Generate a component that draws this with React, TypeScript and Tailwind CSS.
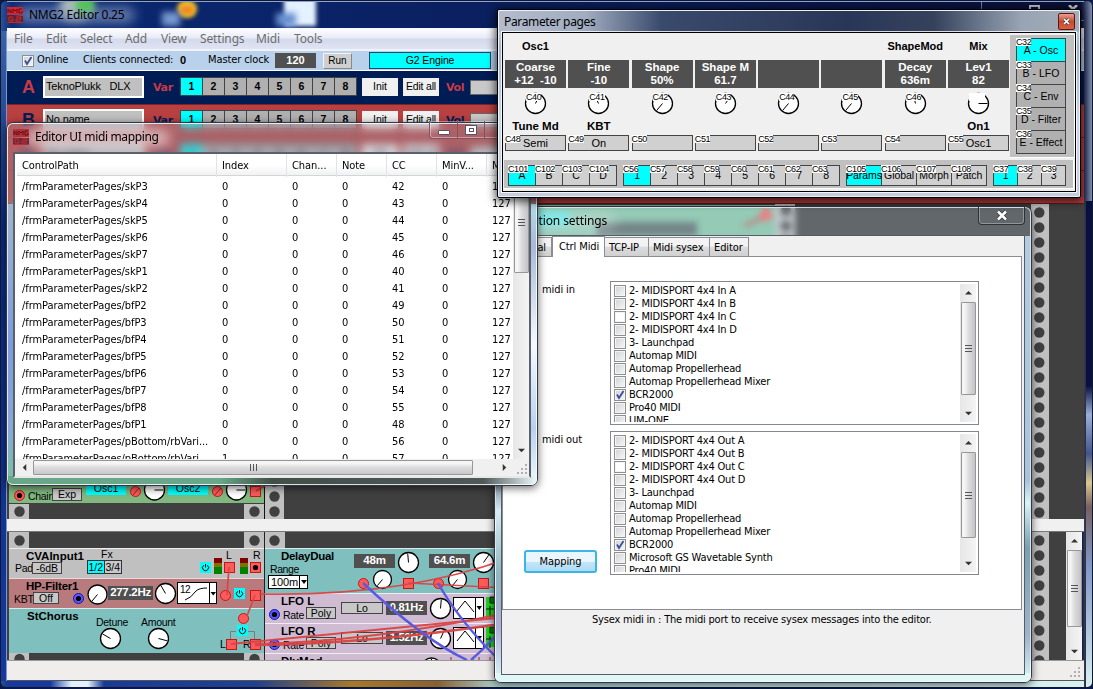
import React from "react";

const UI = "font-['DejaVu_Sans_Condensed','DejaVu_Sans',sans-serif] [font-stretch:condensed]";
const SEGOE = "font-['Noto_Sans','Open_Sans',sans-serif]";
const ARIAL = "font-['Liberation_Sans',Arial,sans-serif]";

function AppIcon({ dim = false }: { dim?: boolean }) {
  return (
    <svg width="16" height="16" viewBox="0 0 16 16" className="shrink-0">
      <rect width="16" height="8" fill={dim ? "#b83038" : "#d8242c"} />
      <rect y="9" width="16" height="6" fill={dim ? "#642c38" : "#5a2430"} />
      <path d="M1 6V2l3 4V2M6 6V2l2 2 2-2v4M15 2h-3v4h3V4" stroke="#5a1018" fill="none" />
      <path d="M6 10H2v4h4v-2H4M9 10h5v2H9v2h5" stroke="#d8242c" fill="none" />
      <rect y="15" width="16" height="1" fill="#c02830" />
    </svg>
  );
}

function Check({ on = false, plain = false }: { on?: boolean; plain?: boolean }) {
  return (
    <span className={`block h-[12px] w-[12px] shrink-0 border border-[#8e8f8f] ${plain ? "bg-white" : "bg-[linear-gradient(135deg,#cfd3d8,#f6f6f6)]"} shadow-[inset_0_0_0_1px_#f4f4f4]`}>
      {on && (
        <svg width="10" height="10" viewBox="0 0 10 10">
          <path d="M2 4.5L4 8L8.5 1" stroke="#3a4f96" strokeWidth="1.8" fill="none" />
        </svg>
      )}
    </span>
  );
}

function Arrow({ dir }: { dir: "up" | "down" | "left" | "right" }) {
  const d = { up: "M0 5L4 1L8 5Z", down: "M0 2L8 2L4 6Z", left: "M6 0L2 4L6 8Z", right: "M2 0L6 4L2 8Z" }[dir];
  return (
    <svg width="7" height="7" viewBox="0 0 8 8" className="shrink-0">
      <path d={d} fill="#333" />
    </svg>
  );
}

function VScroll({ thumb, className = "" }: { thumb: string; className?: string }) {
  return (
    <div className={`flex w-[16px] shrink-0 flex-col items-center bg-[linear-gradient(90deg,#e6e6e6,#f4f4f4)] ${className}`}>
      <div className="flex h-[18px] items-center"><Arrow dir="up" /></div>
      <div className={`flex w-[15px] flex-col items-center justify-center gap-px rounded-[1px] border border-[#979797] bg-[linear-gradient(90deg,#f5f5f5_20%,#dcdcdc_50%,#c4c4c8)] ${thumb}`}>
        <i className="mb-px h-px w-[7px] bg-[#555]" /><i className="mb-px h-px w-[7px] bg-[#555]" /><i className="h-px w-[7px] bg-[#555]" />
      </div>
      <div className="mt-auto flex h-[18px] items-center"><Arrow dir="down" /></div>
    </div>
  );
}

function Grip() {
  return (
    <svg width="12" height="12" viewBox="0 0 12 12" fill="#b0b0b0">
      {[[8, 1], [4, 5], [8, 5], [0, 9], [4, 9], [8, 9]].map(([x, y]) => <rect key={`${x}-${y}`} x={x} y={y} width="2" height="2" />)}
    </svg>
  );
}

/* ---------- main window ---------- */

function Slot({ letter, name, red }: { letter: string; name: string; red?: boolean }) {
  const ink = red ? "text-[#001d55]" : "text-[#c93a47]";
  return (
    <div className={`flex h-[33px] shrink-0 items-start ${red ? "border-t border-[#7c2328] bg-[#b94040] pt-[4px]" : "bg-[#001c55] pt-[5px]"}`}>
      <b className={`${ARIAL} ${ink} ml-[15px] w-[14px] text-[18px] leading-[23px]`}>{letter}</b>
      <div className={`${ARIAL} ml-[7px] h-[22px] w-[101px] whitespace-pre border-2 border-white bg-[#c0c0c0] pl-px text-[11px] leading-[16px] tracking-[-0.15px] text-black`}>{name}</div>
      <b className={`font-['DejaVu_Sans',sans-serif] ${ink} ml-[9px] w-[27px] text-[11px] leading-[23px] tracking-[-0.3px]`}>Var</b>
      <div className="mt-px flex border-l border-[#444]">
        {[1, 2, 3, 4, 5, 6, 7, 8].map((n) => (
          <b key={n} className={`${ARIAL} h-[19px] w-[22px] border-y border-r border-[#444] text-center text-[10.5px] leading-[17px] ${n === 1 ? "bg-[#00ffff]" : "bg-[#b0b0b0]"}`}>{n}</b>
        ))}
      </div>
      <div className={`${ARIAL} ml-[5px] mt-[2px] h-[18px] w-[36px] bg-[#f0f0f0] text-center text-[10.5px] leading-[17px]`}>Init</div>
      <div className={`${ARIAL} ml-[5px] mt-[2px] h-[18px] w-[36px] whitespace-nowrap bg-[#f0f0f0] text-center text-[10.5px] leading-[17px] tracking-[-0.2px]`}>Edit all</div>
      <b className={`font-['DejaVu_Sans',sans-serif] ${ink} ml-[7px] w-[24px] text-[11px] leading-[23px] tracking-[-0.3px]`}>Vol</b>
      <div className="mt-[4px] h-[15px] w-[120px] border border-[#666] bg-[#c8c8c8]" />
    </div>
  );
}

function Holes({ x, ys }: { x: number; ys: number[] }) {
  return <>{ys.map((y) => <circle key={y} cx={x} cy={y} r="5.2" fill="#404040" />)}</>;
}

function Knob({ x, y, r = 10, a }: { x: number; y: number; r?: number; a: number }) {
  const t = (a * Math.PI) / 180;
  return (
    <g stroke="#000">
      <circle cx={x} cy={y} r={r} fill="#fff" strokeWidth="1.3" />
      <line x1={x} y1={y} x2={x + Math.sin(t) * (r - 1)} y2={y - Math.cos(t) * (r - 1)} strokeWidth="1" />
    </g>
  );
}

function Jack({ x, y, c = "red", square, hole }: { x: number; y: number; c?: "red" | "blue"; square?: boolean; hole?: boolean }) {
  const fill = c === "red" ? "#ff5a5a" : "#5a5aff";
  const edge = c === "red" ? "#c01818" : "#1414a0";
  return (
    <g>
      {square ? <rect x={x - 5} y={y - 5} width="10" height="10" fill={fill} stroke={edge} /> : <circle cx={x} cy={y} r="5" fill={fill} stroke={edge} />}
      {hole && <circle cx={x} cy={y} r="2.6" fill="#000" />}
    </g>
  );
}

function Power({ x, y }: { x: number; y: number }) {
  return (
    <g transform={`translate(${x - 5.5} ${y - 5.5})`}>
      <rect width="11" height="11" fill="#00ffff" />
      <path d="M3.7 3.3A3 3 0 1 0 7.3 3.3M5.5 2V5.5" fill="none" stroke="#000" />
    </g>
  );
}

const tag = `${ARIAL} absolute whitespace-nowrap leading-[13px] text-black`;
const btn = "border border-[#444] bg-[#c8c8c8] text-center";
const disp = "bg-[#505050] text-center font-bold text-white";

function UpperRack() {
  const col = Array.from({ length: 22 }, (_, i) => 7 + i * 15);
  return (
    <div className="relative h-[315px] shrink-0 overflow-hidden bg-[#404040]">
      <div className="absolute left-[2px] top-0 h-[299px] w-[255px] bg-[#80b880]" />
      <div className="absolute left-[258px] top-px h-[60px] w-[510px] bg-[#84c4a4]" />
      <div className="absolute left-[515px] top-[8px] h-[14px] w-[48px] bg-[#40e8e0]" />
      <div className="absolute left-[590px] top-[18px] h-[14px] w-[100px] bg-[#5a6a68]" />
      <svg className="absolute left-px top-0" width="1078" height="315">
        <rect x="767" width="20" height="315" fill="#c0c0c0" />
        <Holes x={778} ys={col} />
        <rect x="1023" width="18" height="315" fill="#c0c0c0" />
        <Holes x={1031.3} ys={col.map((y) => y + 1.500)} />
        <path d="M736 22L758 12" stroke="#d04848" strokeWidth="3" />
        <circle cx="758" cy="11" r="6" fill="#ff5a5a" />
        <rect x="1" y="300" width="20" height="15" fill="#c0c0c0" />
        <rect x="236" y="300" width="20" height="15" fill="#c0c0c0" />
        <rect x="256" width="1" height="315" fill="#111" />
        <rect x="257" y="61" width="19" height="254" fill="#c0c0c0" />
        <Holes x={11.5} ys={[307.5]} />
        <Holes x={246.5} ys={[307.5]} />
        <Holes x={266.5} ys={[277.5, 292.5, 307.5]} />
        <Jack x={11.5} y={291.5} hole />
        <Jack x={127.5} y={287.5} /><path d="M125 291L131 284" stroke="#b01818" />
        <Knob x={146.5} y={286} a={90} />
        <Jack x={209.5} y={287.5} /><path d="M207 291L213 284" stroke="#b01818" />
        <Knob x={228.5} y={286} a={90} />
        <Jack x={247.5} y={287.5} square />
        <path d="M248 287L260 280" stroke="#d83030" strokeWidth="1.5" />
      </svg>
      <b className={`${tag} left-[20px] top-[272px] text-[11px]`}>Mix</b>
      <span className={`${tag} left-[21px] top-[286px] text-[10.5px] tracking-[-0.3px]`}>Chain</span>
      <span className={`${tag} ${btn} left-[45px] top-[284px] h-[13px] w-[30px] text-[10.5px] !leading-[11px]`}>Exp</span>
      <span className={`${tag} left-[79px] top-[278px] h-[13px] w-[40px] bg-[#00ffff] text-center text-[10.5px]`}>Osc1</span>
      <span className={`${tag} left-[161px] top-[278px] h-[13px] w-[40px] bg-[#00ffff] text-center text-[10.5px]`}>Osc2</span>
    </div>
  );
}

function Module({ className }: { className: string }) {
  return <div className={`shrink-0 border-t border-white/70 ${className}`} />;
}

function LowerRack() {
  const rail = "h-[16px] shrink-0 border-x-[20px] border-[#c0c0c0] bg-[#404040]";
  return (
    <div className="relative h-[128px] min-w-0 flex-1 overflow-hidden bg-[#404040]">
      <div className="flex">
        <div className="ml-[2px] flex w-[255px] flex-col">
          <div className={rail} />
          <Module className="h-[30px] bg-[#c0c0c0]" />
          <Module className="h-[30px] bg-[#b97a7d]" />
          <Module className="h-[45px] bg-[#7fc0bf]" />
          <div className={rail} />
        </div>
        <div className="w-px bg-[#222]" />
        <div className="flex w-[420px] flex-col">
          <div className={rail} />
          <Module className="h-[45px] bg-[#7fc0bf]" />
          <Module className="h-[30px] bg-[#d0bcd2]" />
          <Module className="h-[30px] bg-[#d0bcd2]" />
          <Module className="h-[20px] bg-[#d0bcd2]" />
        </div>
      </div>

      <b className={`${tag} left-[19px] top-[18px] text-[11.5px]`}>CVAInput1</b>
      <span className={`${tag} left-[8px] top-[30px] text-[10.5px] tracking-[-0.3px]`}>Pad</span>
      <span className={`${tag} ${btn} left-[25px] top-[30px] h-[12px] w-[30px] text-[10.5px] !leading-[10px]`}>-6dB</span>
      <span className={`${tag} left-[94px] top-[16px] text-[10.5px]`}>Fx</span>
      <span className={`${tag} left-[80px] top-[28px] flex h-[14px] w-[35px] border border-[#333] bg-[#c8c8c8] text-[10.5px] !leading-[12px]`}>
        <i className="w-[17px] border-r border-[#333] bg-[#00ffff] text-center not-italic">1/2</i>
        <i className="w-[17px] text-center not-italic">3/4</i>
      </span>
      <span className={`${tag} left-[219px] top-[17px] text-[10.5px]`}>L</span>
      <span className={`${tag} left-[246px] top-[17px] text-[10.5px]`}>R</span>

      <b className={`${tag} left-[19px] top-[48px] text-[11.5px] tracking-[-0.2px]`}>HP-Filter1</b>
      <span className={`${tag} left-[7px] top-[61px] text-[10.5px] tracking-[-0.3px]`}>KBT</span>
      <span className={`${tag} ${btn} left-[26px] top-[60px] h-[12px] w-[26px] text-[10.5px] !leading-[10px]`}>Off</span>
      <span className={`${tag} ${disp} left-[101px] top-[54px] h-[14px] w-[45px] text-[11.5px] tracking-[-0.3px]`}>277.2Hz</span>
      <span className={`${tag} left-[170px] top-[50px] h-[22px] w-[40px] border border-black bg-white pl-[2px] text-[10px] tracking-[-0.6px]`}>12</span>

      <b className={`${tag} left-[20px] top-[78px] text-[11.5px]`}>StChorus</b>
      <span className={`${tag} left-[89px] top-[84px] text-[10.5px] tracking-[-0.3px]`}>Detune</span>
      <span className={`${tag} left-[134px] top-[84px] text-[10.5px] tracking-[-0.3px]`}>Amount</span>
      <span className={`${tag} left-[213px] top-[106px] text-[10.5px]`}>L</span>
      <span className={`${tag} left-[236px] top-[106px] text-[10.5px]`}>R</span>

      <b className={`${tag} left-[274px] top-[18px] text-[11.5px] tracking-[-0.3px]`}>DelayDual</b>
      <span className={`${tag} left-[263px] top-[31px] text-[10.5px] tracking-[-0.4px]`}>Range</span>
      <span className={`${tag} left-[261px] top-[43px] h-[14px] w-[40px] border border-black bg-white pl-[2px] text-[11px] !leading-[13px] tracking-[-0.1px]`}>100m</span>
      <span className={`${tag} ${disp} left-[347px] top-[22px] h-[14px] w-[41px] text-[11.5px] tracking-[-0.2px]`}>48m</span>
      <span className={`${tag} ${disp} left-[422px] top-[22px] h-[14px] w-[41px] text-[11.5px] tracking-[-0.2px]`}>64.6m</span>
      <b className={`${tag} left-[274px] top-[63px] text-[11.5px]`}>LFO L</b>
      <span className={`${tag} left-[276px] top-[77px] text-[10.5px] tracking-[-0.3px]`}>Rate</span>
      <span className={`${tag} ${btn} left-[299px] top-[75px] h-[12px] w-[30px] text-[10.5px] !leading-[10px]`}>Poly</span>
      <span className={`${tag} ${btn} left-[334px] top-[70px] h-[12px] w-[42px] text-[10.5px] !leading-[10px]`}>Lo</span>
      <span className={`${tag} ${disp} left-[379px] top-[69px] h-[14px] w-[41px] text-[11px] tracking-[-0.2px]`}>0.81Hz</span>
      <b className={`${tag} left-[274px] top-[93px] text-[11.5px]`}>LFO R</b>
      <span className={`${tag} left-[276px] top-[107px] text-[10.5px] tracking-[-0.3px]`}>Rate</span>
      <span className={`${tag} ${btn} left-[299px] top-[105px] h-[12px] w-[30px] text-[10.5px] !leading-[10px]`}>Poly</span>
      <span className={`${tag} ${btn} left-[334px] top-[100px] h-[12px] w-[42px] text-[10.5px] !leading-[10px]`}>Lo</span>
      <span className={`${tag} ${disp} left-[379px] top-[99px] h-[14px] w-[41px] text-[11px] tracking-[-0.2px]`}>1.52Hz</span>
      <b className={`${tag} left-[274px] top-[123px] text-[11.5px]`}>DlyMod</b>

      <svg className="absolute left-0 top-0" width="1060" height="128">
        <rect x="1024" width="18" height="128" fill="#c0c0c0" />
        <Holes x={1032.3} ys={[8.5, 23.5, 38.5, 53.5, 68.5, 83.5, 98.5, 113.5, 128.5]} />
        <Holes x={12.5} ys={[8.5, 127]} />
        <Holes x={247.5} ys={[8.5, 127]} />
        <Holes x={267.5} ys={[8.5]} />
        <Power x={198.500} y={35.500} />
        <g><rect x="207" y="26" width="8" height="5" fill="#800000" /><rect x="207" y="31" width="8" height="4" fill="#807000" /><rect x="207" y="35" width="8" height="7" fill="#008000" /></g>
        <g><rect x="233" y="26" width="8" height="5" fill="#800000" /><rect x="233" y="31" width="8" height="4" fill="#807000" /><rect x="233" y="35" width="8" height="7" fill="#008000" /></g>
        <Jack x={222.5} y={35.5} square />
        <Jack x={248.5} y={35.5} square hole />
        <Jack x={71.5} y={66.5} c="blue" hole />
        <Knob x={90.5} y={62.500} r={9.5} a={220} />
        <Knob x={158.5} y={61.5} a={-30} />
        <path d="M178 68Q184 66 189 59Q192 56 200 56" fill="none" stroke="#000" />
        <path d="M202.5 50V72" stroke="#000" /><path d="M203.500 60H209L206.250 63.500Z" />
        <Jack x={218.5} y={63.5} />
        <Power x={232.500} y={61.500} />
        <Jack x={248.5} y={63.5} square />
        <Jack x={236.5} y={86.5} />
        <Power x={235.500} y={98.500} />
        <path d="M223.5 107V99.5H229M241 99.5H247.500V107" stroke="#708080" fill="none" />
        <Knob x={103.5} y={106.5} a={-60} />
        <Knob x={151.5} y={106.5} a={105} />
        <Jack x={224.5} y={112.5} square />
        <Jack x={248.5} y={112.5} square />

        <path d="M292.5 43V57" stroke="#000" /><path d="M294 48H300L297 52Z" />
        <Knob x={401.5} y={30.5} a={-5} />
        <Knob x={476.5} y={30.5} a={35} />
        <Jack x={356.5} y={51.5} /><Knob x={375.5} y={47.5} r={9} a={220} />
        <Jack x={401.5} y={51.5} square />
        <Jack x={431.5} y={51.5} /><Knob x={450.5} y={47.5} r={9} a={220} />
        <Jack x={476.5} y={51.5} square />
        {[0, 30].map((dy) => (
          <g key={dy} transform={`translate(0 ${dy})`}>
            <Jack x={267.5} y={82.5} c="blue" hole />
            <Knob x={433.5} y={76.5} a={dy ? 25 : 5} />
            <rect x="446.5" y="65.5" width="30" height="21" fill="#fff" stroke="#000" />
            <path d="M468.5 65V86M450 79L458 69L467 80" stroke="#000" fill="none" />
            <path d="M469.500 74H475L472.250 78Z" />
            <rect x="479" y="65" width="9" height="20" fill="#20d020" />
            <path d="M483 65H488V71H483ZM479 77H488M483 74V86" stroke="#052005" fill="#087808" />
          </g>
        ))}
        <Knob x={424.5} y={136} a={0} />
        <path d="M444 125V128M466 125V128M472 125V128M483 125V128" stroke="#733" />
        <g fill="none" stroke="#d94444" strokeWidth="1.7" opacity="0.95">
          <path d="M222 35L220 63" />
          <path d="M248 63L240 84" />
          <path d="M252 62C350 64 430 52 500 27" />
          <path d="M401 51L500 56" />
          <path d="M224 112L500 85" strokeWidth="2" />
          <path d="M248 112Q360 110 500 81" strokeWidth="2" />
          <path d="M248 113Q360 112 500 91" strokeWidth="2.400" />
        </g>
        <g fill="none" stroke="#5a5ae0" strokeWidth="2.400">
          <path d="M356 51C385 78 425 112 460 128" />
          <path d="M431 51C446 78 468 104 488 124" />
          <path d="M464 128Q480 114 492 100" />
        </g>
      </svg>
    </div>
  );
}

const menu: [string, string][] = [
  ["File", "w-[32px]"], ["Edit", "w-[34px]"], ["Select", "w-[45px]"], ["Add", "w-[36px]"],
  ["View", "w-[39px]"], ["Settings", "w-[56px]"], ["Midi", "w-[38px]"], ["Tools", "w-[40px]"],
];

function MainWindow() {
  return (
    <section className="absolute left-0 top-0 flex h-[688px] w-[1093px] flex-col overflow-hidden rounded-[6px] border border-[#101830] bg-[linear-gradient(90deg,#2a5298,#0a2a74_1%,#0a1e5c_50%,#0a0f38_99%,#8090b0)] pl-[6px] pr-[8px]">
      <header className="relative flex h-[27px] shrink-0 items-center overflow-hidden border-t border-[#8fa4d0]">
        <i className="absolute left-[52px] top-[-6px] h-[24px] w-[32px] rounded-full bg-[#b8c8b8] blur-[4px]" />
        <i className="absolute left-[69px] top-[-4px] h-[16px] w-[18px] bg-[#40d030] blur-[3px]" />
        <i className="absolute left-[170px] top-[-2px] h-[18px] w-[20px] rounded-full bg-[#f0c030] blur-[2px]" />
        <i className="absolute left-[174px] top-[4px] h-[8px] w-[12px] bg-[#f08820] blur-[2px]" />
        <i className="absolute left-[155px] top-[10px] h-[14px] w-[18px] bg-[#7898d0] blur-[3px]" />
        <i className="absolute left-[277px] top-[-4px] h-[28px] w-[32px] bg-[#e4f2ff] blur-[2px]" />
        <i className="absolute left-[269px] top-[11px] h-[13px] w-[20px] bg-[#6890d0] blur-[3px]" />
        <i className="absolute left-[10px] top-[5px] h-[16px] w-[118px] rounded-full bg-[#8c9cc4]/70 blur-[6px]" />
        <i className="absolute right-[-1px] top-[-1px] h-[20px] w-[104px] border border-[#7880a0]" />
        <i className="absolute right-[44px] top-[3px] h-[6px] w-[11px] border-2 border-[#c0c4cc]" />
        <svg className="absolute right-[6px] top-[3px]" width="10" height="8"><path d="M1 0L9 8M9 0L1 8" stroke="#c8ccd4" strokeWidth="2.5" /></svg>
        <div className="relative flex items-center"><AppIcon /></div>
        <span className={`${SEGOE} relative ml-[6px] whitespace-nowrap text-[12px] leading-[20px] tracking-[-0.25px] text-black`}>NMG2 Editor 0.25</span>
      </header>
      <div className="flex min-h-0 flex-1 flex-col border-t border-[#f4f8ff]">
        <nav className={`${SEGOE} flex h-[20px] shrink-0 items-center bg-[linear-gradient(#fdfdff,#e8ebf7_45%,#d5daec_50%,#dfe3f2)] pl-[7px] text-[12px] tracking-[-0.15px] text-[#6d6d6d]`}>
          {menu.map(([t, w]) => <span key={t} className={w}>{t}</span>)}
        </nav>
        <div className={`${UI} flex h-[22px] shrink-0 items-center border-b border-t-2 border-b-white border-t-[#eef2fa] bg-[#b9d1ea] pl-[15px] text-[11px] text-black`}>
          <Check on />
          <span className="ml-[3px] w-[46px] tracking-[-0.1px]">Online</span>
          <span className="w-[97px] whitespace-nowrap tracking-[-0.1px]">Clients connected:</span>
          <b className={`${ARIAL} w-[28px]`}>0</b>
          <span className="w-[67px] whitespace-nowrap tracking-[-0.1px]">Master clock</span>
          <b className={`${ARIAL} h-[15px] w-[41px] bg-[#505050] text-center leading-[15px] text-white`}>120</b>
          <span className={`${ARIAL} ml-[7px] h-[16px] w-[29px] border border-[#f4f4f4] border-b-[#888] border-r-[#888] bg-[#cfcfcf] text-center text-[10px] leading-[14px]`}>Run</span>
          <span className={`${ARIAL} ml-[17px] h-[17px] w-[122px] border border-[#246] bg-[#00ffff] text-center text-[10.5px] leading-[15px] tracking-[-0.1px]`}>G2 Engine</span>
        </div>
        <Slot letter="A" name="TeknoPlukk   DLX" />
        <Slot letter="B" name="No name" red />
        <Slot letter="C" name="No name" red />
        <Slot letter="D" name="No name" red />
        <div className="h-px shrink-0 bg-[#6a1418]" />
        <UpperRack />
        <div className="h-[13px] shrink-0 border-b border-[#777] bg-[#f0f0f0]" />
        <div className="flex h-[128px] shrink-0">
          <LowerRack />
          <VScroll thumb="h-[77px]" className="mr-[2px] h-[128px]" />
        </div>
        <footer className="flex h-[21px] shrink-0 items-end justify-end border-b border-t border-b-[#555] border-t-[#999] bg-[#f0eded] p-[2px]"><Grip /></footer>
      </div>
      <div className="relative h-[6px] shrink-0 overflow-hidden bg-[linear-gradient(90deg,#1638a0,#1638a0_4%,#e0f0ff_6%,#e0f0ff_7.5%,#1a3a98_9%,#204090_23%,#a87828_32%,#8a6030_40%,#b0d8d8_46%,#d8f0f0)]" />
      <i className="absolute bottom-[6px] left-0 top-[30px] w-[6px] border-r border-[#8098c8] bg-[linear-gradient(#3a62a8,#0a2a80_30%,#1438a0)]" />
      <i className="absolute bottom-0 right-0 top-[200px] w-[7px] border-l border-[#333] bg-[linear-gradient(#081040,#081040_38%,#9ab0d8_44%,#44548c_52%,#d8c890_58%,#786060_63%,#8098c8_75%,#d8f0f0)]" />
    </section>
  );
}

/* ---------- midi mapping window ---------- */

const rows: [string, string, string][] = [
  ["skP3", "0", "42"], ["skP4", "0", "43"], ["skP5", "0", "44"], ["skP6", "0", "45"], ["skP7", "0", "46"],
  ["skP1", "0", "40"], ["skP2", "0", "41"], ["bfP2", "0", "49"], ["bfP3", "0", "50"], ["bfP4", "0", "51"],
  ["bfP5", "0", "52"], ["bfP6", "0", "53"], ["bfP7", "0", "54"], ["bfP8", "0", "55"], ["bfP1", "0", "48"],
  ["pBottom/rbVari...", "0", "56"], ["pBottom/rbVari...", "1", "57"],
];
const cols = "grid shrink-0 grid-cols-[200px_70px_50px_50px_50px_50px_60px]";

function MappingWindow() {
  return (
    <section className="absolute left-[6px] top-[122px] h-[364px] w-[532px] rounded-[7px] border border-[#303848] shadow-[0_2px_8px_rgba(0,0,0,0.6)]">
      <div className="absolute inset-0 overflow-hidden rounded-[6px] border border-white/80 bg-[#a0a0b0]/35 backdrop-blur-[4px]">
        <i className="absolute bottom-0 left-0 top-[80px] w-[6px] bg-[linear-gradient(#9fb4cc,#7c9ce0_50%,#88a8d8_80%,#78c0a0)]" />
        <i className="absolute bottom-0 right-0 top-[80px] w-[8px] bg-[linear-gradient(#b0dce8,#a8b8d8_15%,#f4faff_50%,#b8d0f0_80%,#eefafa)]" />
        <i className="absolute bottom-0 left-0 h-[8px] w-full bg-[linear-gradient(90deg,#68a888_40%,#405048_50%,#505858_90%,#e8f8f8)]" />
        <i className="absolute left-[18px] top-[5px] h-[18px] w-[144px] rounded-full bg-white/50 blur-[6px]" />
      </div>
      <div className="relative flex h-full flex-col px-[6px] pb-[7px]">
        <header className="flex h-[29px] shrink-0 items-center pb-[2px]">
          <AppIcon dim />
          <span className={`${SEGOE} ml-[6px] flex-1 whitespace-nowrap text-[12px] tracking-[-0.35px] text-black`}>Editor UI midi mapping</span>
          <div className="-mb-px -mt-[2px] flex h-[18px] w-[102px] self-start rounded-b-[4px] border border-t-0 border-[#7c5560] shadow-[inset_0_0_0_1px_rgba(255,255,255,0.4)]">
            <span className="flex w-[28px] items-center justify-center border-r border-[#7c5560] pt-[6px]"><i className="h-[5px] w-[12px] rounded-[1px] border border-[#556] bg-white" /></span>
            <span className="flex w-[27px] items-center justify-center border-r border-[#7c5560]"><i className="flex h-[10px] w-[12px] items-center justify-center border border-[#556] bg-white"><i className="h-[4px] w-[5px] border border-[#556]" /></i></span>
          </div>
        </header>
        <div className="flex min-h-0 flex-1 flex-col border-2 border-[#5a606c] border-b-[#e8e8e8] bg-white">
          <div className="flex min-h-0 flex-1">
            <div className={`${UI} flex min-w-0 flex-1 flex-col overflow-hidden pl-[7px] text-[11px] tracking-[-0.07px] text-black`}>
              <div className={`${cols} -ml-[5px] mb-[2px] h-[22px] border-b border-[#d5d5d5] bg-[linear-gradient(#fff_50%,#f1f2f4)] leading-[23px]`}>
                {["ControlPath", "Index", "Chan...", "Note", "CC", "MinV...", "MaxV..."].map((h) => <span key={h} className="border-r border-[#e0e3e8] pl-[5px]">{h}</span>)}
              </div>
              {rows.map(([p, i, cc], n) => (
                <div key={n} className={`${cols} h-[17px] leading-[17px]`}>
                  <span className="whitespace-nowrap">/frmParameterPages/{p}</span>
                  <span>{i}</span><span>0</span><span>0</span><span>{cc}</span><span>0</span><span>127</span>
                </div>
              ))}
            </div>
            <VScroll thumb="h-[101px]" />
          </div>
          <div className="flex h-[17px] shrink-0 items-center bg-[#f0f0f0]">
            <div className="flex w-[18px] justify-center"><Arrow dir="left" /></div>
            <div className="flex h-[15px] w-[440px] items-center justify-center gap-[2px] rounded-[1px] border border-[#979797] bg-[linear-gradient(#f5f5f5_20%,#dcdcdc_50%,#c8c8cc)]">
              <i className="h-[7px] w-px bg-[#555]" /><i className="h-[7px] w-px bg-[#555]" /><i className="h-[7px] w-px bg-[#555]" />
            </div>
            <div className="ml-auto flex w-[18px] justify-center"><Arrow dir="right" /></div>
            <div className="flex w-[16px] justify-end pt-[3px]"><Grip /></div>
          </div>
        </div>
      </div>
    </section>
  );
}

/* ---------- settings window ---------- */

function DeviceList({ items, thumb }: { items: string[]; thumb: string }) {
  return (
    <div className="flex h-[144px] w-[369px] border border-[#828790] bg-white py-[2px] pr-[2px]">
      <div className="flex-1 overflow-hidden pl-[3px] tracking-[-0.2px]">
        {items.map((t, i) => (
          <div key={t} className="flex h-[13px] items-center gap-[3px] whitespace-nowrap leading-[13px]">
            <Check on={t === "BCR2000"} plain={i === 2} />
            {t}
          </div>
        ))}
      </div>
      <VScroll thumb={thumb} />
    </div>
  );
}

const common = ["3- Launchpad", "Automap MIDI", "Automap Propellerhead", "Automap Propellerhead Mixer", "BCR2000"];
const ports = (d: string) => ["A", "B", "C", "D"].map((p) => `2- MIDISPORT 4x4 ${d} ${p}`);

function SettingsWindow() {
  const tab = "h-[19px] border border-b-0 border-[#898c95] bg-[linear-gradient(#f3f3f3_45%,#dcdcdc_50%,#d0d0d0)] pl-[4px] leading-[19px]";
  const label = "h-[150px] w-[68px] shrink-0 whitespace-nowrap pt-px";
  return (
    <section className="absolute left-[494px] top-[206px] h-[477px] w-[538px] rounded-[7px] border border-[#303848] shadow-[0_2px_8px_rgba(0,0,0,0.6)]">
      <div className="absolute inset-0 overflow-hidden rounded-[6px] border border-white/80 bg-[#c4dcec]/25 backdrop-blur-[3px]">
        <i className="absolute bottom-0 right-0 top-[28px] w-[7px] bg-[linear-gradient(#b4cbe4,#a8c4dc_55%,#d8f4fc_60%,#78a0b0_70%,#a0b4cc_90%,#d8f8f8)]" />
        <i className="absolute bottom-0 left-0 top-[260px] w-[7px] bg-[linear-gradient(#506478,#d8ecf4_20%,#90b8c0_50%,#b0b0d8_75%,#d8f8f8)]" />
        <i className="absolute bottom-0 left-0 h-[8px] w-full bg-[#dff8f7]" />
        <i className="absolute left-[20px] top-[4px] h-[20px] w-[100px] rounded-full bg-white/25 blur-[6px]" />
      </div>
      <div className={`${UI} relative flex h-full flex-col px-[6px] pb-[7px] text-[11px] tracking-[-0.1px] text-black`}>
        <header className="flex h-[28px] shrink-0 items-center justify-between">
          <span className={`${SEGOE} -ml-[3px] text-[12px] tracking-[-0.1px]`}>Application settings</span>
          <span className="flex h-[18px] w-[47px] items-center justify-center self-start rounded-b-[4px] border border-t-0 border-[#2c3238] shadow-[inset_0_0_0_1px_rgba(255,255,255,0.3)]">
            <svg width="12" height="11" viewBox="0 0 12 11"><path d="M2 1.5L10 9.500M10 1.500L2 9.500" stroke="#333" strokeWidth="4" /><path d="M2 1.500L10 9.500M10 1.500L2 9.500" stroke="#fff" strokeWidth="2.600" /></svg>
          </span>
        </header>
        <div className="flex min-h-0 flex-1 flex-col border border-[#555c66] bg-[#f0f0f0]">
          <div className="flex h-[20px] shrink-0 items-end">
            <div className={`${tab} w-[50px] pr-[5px] text-right`}>General</div>
            <div className="z-10 -mb-px h-[21px] w-[53px] border border-b-0 border-[#898c95] bg-white pl-[6px] leading-[19px]">Ctrl Midi</div>
            <div className={`${tab} w-[44px] border-l-0`}>TCP-IP</div>
            <div className={`${tab} w-[61px] border-l-0`}>Midi sysex</div>
            <div className={`${tab} w-[39px] border-l-0`}>Editor</div>
          </div>
          <div className="mr-[2px] flex h-[354px] shrink-0 border border-[#898c95] bg-white pt-[24px]">
            <div className="flex w-[107px] shrink-0 flex-col pl-[39px]">
              <span className={label}>midi in</span>
              <span className="h-[119px] w-[68px] shrink-0 whitespace-nowrap pt-px">midi out</span>
              <button className="-ml-[18px] h-[23px] w-[73px] rounded-[3px] border-2 border-[#3cb4e8] bg-[linear-gradient(#eaf6fd_50%,#c4e5f8_52%,#aedcf4)] leading-[19px]">Mapping</button>
            </div>
            <div className="flex flex-col gap-[6px]">
              <DeviceList items={[...ports("In"), ...common, "Pro40 MIDI", "UM-ONE"]} thumb="h-[93px]" />
              <DeviceList items={[...ports("Out"), ...common, "Microsoft GS Wavetable Synth", "Pro40 MIDI"]} thumb="h-[86px]" />
            </div>
          </div>
          <p className="pl-[90px] pt-[2px] tracking-[-0.2px]">Sysex midi in : The midi port to receive sysex messages into the editor.</p>
        </div>
      </div>
    </section>
  );
}

/* ---------- parameter pages window ---------- */

const params = [
  { g: "Osc1", n: "Coarse", v: "+12  -10", a: 25, k: "C40", l: "Tune Md", c: "C48", b: "Semi" },
  { g: "", n: "Fine", v: "-10", a: -25, k: "C41", l: "KBT", c: "C49", b: "On" },
  { g: "", n: "Shape", v: "50%", a: 220, k: "C42", l: "", c: "C50", b: "" },
  { g: "", n: "Shape M", v: "61.7", a: 35, k: "C43", l: "", c: "C51", b: "" },
  { g: "", n: "", v: "", a: 220, k: "C44", l: "", c: "C52", b: "" },
  { g: "", n: "", v: "", a: 220, k: "C45", l: "", c: "C53", b: "" },
  { g: "ShapeMod", n: "Decay", v: "636m", a: -15, k: "C46", l: "", c: "C54", b: "" },
  { g: "Mix", n: "Lev1", v: "82", a: 90, k: "", l: "On1", c: "C55", b: "Osc1" },
];

function Code({ children, className = "-left-px -top-px" }: { children: React.ReactNode; className?: string }) {
  return <span className={`${ARIAL} absolute z-10 h-[8px] overflow-visible bg-white text-[9px] leading-[8px] tracking-[-0.4px] text-black ${className}`}>{children}</span>;
}

function Group({ items, first, w }: { items: string[]; first: number; w: string }) {
  return (
    <div className="flex border-l border-[#444]">
      {items.map((t, i) => (
        <div key={t} className={`relative flex h-[21px] justify-center border-y border-r border-[#444] text-[10.5px] leading-[19px] tracking-[-0.1px] ${w} ${i === 0 ? "bg-[#00ffff]" : "bg-[#d0d0d0]"}`}>
          <Code>C{first + i}</Code>
          {t}
        </div>
      ))}
    </div>
  );
}

function ParameterWindow() {
  return (
    <section className={`${ARIAL} absolute left-[497px] top-[9px] flex h-[189px] w-[584px] flex-col rounded-[2px] border border-black bg-[linear-gradient(#dde4ee,#9fb4cc_20%,#c8d8e8_60%,#c8ccdc)] px-[4px] pb-[5px] shadow-[0_2px_9px_2px_rgba(0,0,0,0.65),inset_0_0_0_1px_#e8f0f8] text-black`}>
      <header className="-mx-[3px] mt-px flex h-[21px] shrink-0 items-center justify-between bg-[linear-gradient(90deg,#b4bccc,#a0acc0_15%,#3a4a6c_28%,#2a3658_60%,#36425c_75%,#98a4b4_90%,#a4acb8)] pl-[5px] pr-[4px]">
        <span className={`${SEGOE} text-[12px] tracking-[-0.35px]`}>Parameter pages</span>
        <span className="flex h-[17px] w-[17px] items-center justify-center rounded-[2px] border border-[#5a1810] bg-[linear-gradient(#e8a090,#c84830_50%,#d86040)]">
          <svg width="7" height="7" viewBox="0 0 7 7"><path d="M1 1L6 6M6 1L1 6" stroke="#444" strokeWidth="3" /><path d="M1 1L6 6M6 1L1 6" stroke="#fff" strokeWidth="1.700" /></svg>
        </span>
      </header>
      <div className="flex min-h-0 flex-1 flex-col border border-black bg-[#f0f0f0] outline outline-1 outline-white/80">
        <div className="flex h-[127px] shrink-0">
          <div className="grid w-[507px] shrink-0 grid-cols-8 gap-x-[2.3px] pl-[2px] pr-px pt-[6px]">
            {params.map((p) => (
              <div key={p.k + p.c} className="relative flex min-w-0 flex-col text-center">
                <b className="h-[21px] text-[11px] leading-[14px]">{p.g}</b>
                <b className="h-[28px] whitespace-pre bg-[#505050] pt-px text-[11.5px] leading-[13px] text-white">{p.n}<br />{p.v}</b>
                <div className="relative mx-auto mt-[4px] h-[23px] w-[23px]">
                  <svg width="23" height="23" viewBox="0 0 23 23"><Knob x={11.5} y={11.5} a={p.a} /></svg>
                  <Code className="left-[2px] top-[1px]">{p.k || <i className="block h-[8px] w-[16px]" />}</Code>
                </div>
                <b className="h-[19px] whitespace-nowrap pt-[4px] text-[11.5px] leading-[14px]">{p.l}</b>
                <div className="relative mt-px h-[16px] border border-[#444] bg-[#d0d0d0] text-[11px] leading-[14px]">
                  <Code className="-left-px -top-px">{p.c}</Code>{p.b}
                </div>
              </div>
            ))}
          </div>
          <div className="mt-[2px] h-[123px] flex-1 border-b border-r border-white bg-[#c0c0c0] pl-[6px] pt-[3px]">
            <div className="w-[50px] border-t border-[#444]">
              {["A - Osc", "B - LFO", "C - Env", "D - Filter", "E - Effect"].map((t, i) => (
                <div key={t} className={`relative h-[23px] whitespace-nowrap border-x border-b border-[#444] text-center text-[10.5px] leading-[22px] ${i === 0 ? "bg-[#00ffff]" : "bg-[#b0b0b0]"}`}>
                  <Code>C{32 + i}</Code>{t}
                </div>
              ))}
            </div>
          </div>
        </div>
        <div className="mx-px flex h-[29px] shrink-0 items-start gap-[6px] border-b border-r border-white bg-[#c0c0c0] pl-[4px] pt-[5px]">
          <Group items={["A", "B", "C", "D"]} first={101} w="w-[27px]" />
          <Group items={["1", "2", "3", "4", "5", "6", "7", "8"]} first={56} w="w-[27px]" />
          <Group items={["Params", "Global", "Morph", "Patch"]} first={105} w="w-[35px]" />
          <Group items={["1", "2", "3"]} first={37} w="w-[24px]" />
        </div>
      </div>
    </section>
  );
}

export default function App() {
  return (
    <main className="relative h-[689px] w-[1093px] overflow-hidden bg-[#08184c]">
      <MainWindow />
      <SettingsWindow />
      <MappingWindow />
      <ParameterWindow />
    </main>
  );
}
